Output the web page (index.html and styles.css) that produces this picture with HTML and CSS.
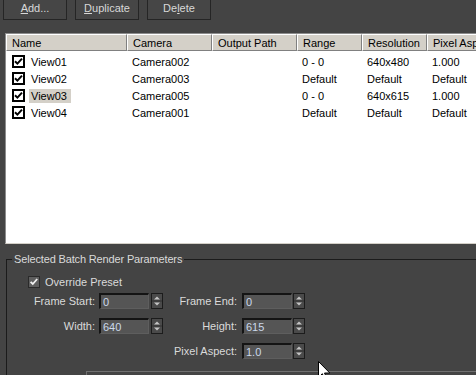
FILE: index.html
```html
<!DOCTYPE html>
<html lang="en">
<head>
    <meta charset="UTF-8">
    <meta name="viewport" content="width=device-width, initial-scale=1.0">
    <title>Batch Render</title>
    <link rel="stylesheet" href="styles.css">
</head>
<body>
    <div class="toolbar">
        <button class="tool-btn"><u>A</u>dd...</button>
        <button class="tool-btn"><u>D</u>uplicate</button>
        <button class="tool-btn">De<u>l</u>ete</button>
    </div>

    <div class="view-list">
        <table class="views">
            <thead>
                <tr>
                    <th class="c-name">Name</th>
                    <th class="c-cam">Camera</th>
                    <th class="c-out">Output Path</th>
                    <th class="c-range">Range</th>
                    <th class="c-res">Resolution</th>
                    <th class="c-aspect">Pixel Aspect</th>
                </tr>
            </thead>
            <tbody>
                <tr>
                    <td class="name"><svg class="chk" width="13" height="13" viewBox="0 0 13 13"><rect x="1" y="1" width="11" height="11" fill="#fff" stroke="#000" stroke-width="2"/><path d="M3 6.2l2.4 2.4 4.6-5" fill="none" stroke="#000" stroke-width="2"/></svg><span class="label">View01</span></td>
                    <td>Camera002</td>
                    <td></td>
                    <td>0 - 0</td>
                    <td>640x480</td>
                    <td>1.000</td>
                </tr>
                <tr>
                    <td class="name"><svg class="chk" width="13" height="13" viewBox="0 0 13 13"><rect x="1" y="1" width="11" height="11" fill="#fff" stroke="#000" stroke-width="2"/><path d="M3 6.2l2.4 2.4 4.6-5" fill="none" stroke="#000" stroke-width="2"/></svg><span class="label">View02</span></td>
                    <td>Camera003</td>
                    <td></td>
                    <td>Default</td>
                    <td>Default</td>
                    <td>Default</td>
                </tr>
                <tr>
                    <td class="name"><svg class="chk" width="13" height="13" viewBox="0 0 13 13"><rect x="1" y="1" width="11" height="11" fill="#fff" stroke="#000" stroke-width="2"/><path d="M3 6.2l2.4 2.4 4.6-5" fill="none" stroke="#000" stroke-width="2"/></svg><span class="label selected">View03</span></td>
                    <td>Camera005</td>
                    <td></td>
                    <td>0 - 0</td>
                    <td>640x615</td>
                    <td>1.000</td>
                </tr>
                <tr>
                    <td class="name"><svg class="chk" width="13" height="13" viewBox="0 0 13 13"><rect x="1" y="1" width="11" height="11" fill="#fff" stroke="#000" stroke-width="2"/><path d="M3 6.2l2.4 2.4 4.6-5" fill="none" stroke="#000" stroke-width="2"/></svg><span class="label">View04</span></td>
                    <td>Camera001</td>
                    <td></td>
                    <td>Default</td>
                    <td>Default</td>
                    <td>Default</td>
                </tr>
            </tbody>
        </table>
    </div>

    <fieldset class="params">
        <legend>Selected Batch Render Parameters</legend>

        <label class="option">
            <svg width="12" height="12" viewBox="0 0 12 12"><rect x="0.5" y="0.5" width="11" height="11" fill="#5e5e5e" stroke="#2a2a2a"/><path d="M2.6 5.8l2.2 2.2 4.4-5" fill="none" stroke="#f0f0f0" stroke-width="1.8"/></svg>
            <span>Override Preset</span>
        </label>

        <div class="fields">
            <span class="field-label">Frame Start:</span>
            <input class="num" type="text" value="0">
            <svg class="spin" width="12" height="16" viewBox="0 0 12 16"><rect x="0.5" y="0.5" width="11" height="15" fill="#4a4a4a" stroke="#1c1c1c"/><line x1="1" y1="8" x2="11" y2="8" stroke="#303030"/><path d="M6 3.5l-3 3h6z" fill="#c4c4c4"/><path d="M6 12.5l-3-3h6z" fill="#c4c4c4"/></svg>
            <span class="field-label wide">Frame End:</span>
            <input class="num" type="text" value="0">
            <svg class="spin" width="12" height="16" viewBox="0 0 12 16"><rect x="0.5" y="0.5" width="11" height="15" fill="#4a4a4a" stroke="#1c1c1c"/><line x1="1" y1="8" x2="11" y2="8" stroke="#303030"/><path d="M6 3.5l-3 3h6z" fill="#c4c4c4"/><path d="M6 12.5l-3-3h6z" fill="#c4c4c4"/></svg>

            <span class="field-label">Width:</span>
            <input class="num" type="text" value="640">
            <svg class="spin" width="12" height="16" viewBox="0 0 12 16"><rect x="0.5" y="0.5" width="11" height="15" fill="#4a4a4a" stroke="#1c1c1c"/><line x1="1" y1="8" x2="11" y2="8" stroke="#303030"/><path d="M6 3.5l-3 3h6z" fill="#c4c4c4"/><path d="M6 12.5l-3-3h6z" fill="#c4c4c4"/></svg>
            <span class="field-label wide">Height:</span>
            <input class="num" type="text" value="615">
            <svg class="spin" width="12" height="16" viewBox="0 0 12 16"><rect x="0.5" y="0.5" width="11" height="15" fill="#4a4a4a" stroke="#1c1c1c"/><line x1="1" y1="8" x2="11" y2="8" stroke="#303030"/><path d="M6 3.5l-3 3h6z" fill="#c4c4c4"/><path d="M6 12.5l-3-3h6z" fill="#c4c4c4"/></svg>

            <span class="field-label wide col4">Pixel Aspect:</span>
            <input class="num" type="text" value="1.0">
            <svg class="spin" width="12" height="16" viewBox="0 0 12 16"><rect x="0.5" y="0.5" width="11" height="15" fill="#4a4a4a" stroke="#1c1c1c"/><line x1="1" y1="8" x2="11" y2="8" stroke="#303030"/><path d="M6 3.5l-3 3h6z" fill="#c4c4c4"/><path d="M6 12.5l-3-3h6z" fill="#c4c4c4"/></svg>
        </div>

        <div class="sub-panel"></div>
    </fieldset>

    <!-- mouse pointer caught in the screenshot -->
    <svg class="cursor" width="12" height="19" viewBox="0 0 12 19"><path d="M0.5 0.5v16l3.8-3.8 2.6 6 2.2-1-2.6-5.7h5.3z" fill="#fff" stroke="#000"/></svg>
</body>
</html>
```

FILE: styles.css
```css
html, body {
    margin: 0;
}
body {
    position: relative;
    width: 476px;
    height: 375px;
    overflow: hidden;
    background-color: #444444;
    color: #dadada;
    font-family: "Liberation Sans", Arial, sans-serif;
    font-size: 11px;
}

/* top buttons */
.toolbar {
    display: flex;
    gap: 8px;
    padding-left: 3px;
}
.tool-btn {
    width: 64px;
    height: 20px;
    padding: 0 0 3px;
    background-color: #464646;
    border: 1px solid #252525;
    border-top: none;
    color: #d8d8d8;
    font: inherit;
}

/* list of views */
.view-list {
    box-sizing: border-box;
    width: 490px;
    height: 211px;
    margin: 13px 0 0 5px;
    background: #fff;
    border: 1px solid;
    border-color: #8c8c8c #d4d0c8 #d4d0c8 #8c8c8c;
    overflow: hidden;
}
.views {
    border-collapse: separate;
    border-spacing: 0;
    table-layout: fixed;
    width: 490px;
    color: #000;
    font-size: 11px;
}
.views th {
    box-sizing: border-box;
    height: 17px;
    padding: 1px 0 0 5px;
    background: #d4d0c8;
    border-top: 1px solid #fff;
    border-left: 1px solid #fff;
    border-right: 1px solid #808080;
    border-bottom: 1px solid #808080;
    font-weight: normal;
    text-align: left;
    line-height: 14px;
    white-space: nowrap;
    overflow: hidden;
}
.views th.c-name { width: 121px; }
.views th.c-cam { width: 85px; }
.views th.c-out { width: 85px; }
.views th.c-range { width: 65px; }
.views th.c-res { width: 65px; }
.views td {
    height: 17px;
    padding: 0 0 0 5px;
    line-height: 17px;
    white-space: nowrap;
}
.views tbody tr:first-child td {
    padding-top: 3px;
}
.views td.name {
    padding-left: 6px;
}
.chk {
    vertical-align: -2px;
    margin-right: 4px;
}
.label {
    display: inline-block;
    padding: 0 4px 0 2px;
    line-height: 14px;
}
.label.selected {
    background: #d4d0c8;
}

/* selected view parameters */
.params {
    margin: 9px 0 0 6px;
    padding: 0;
    min-width: 0;
    border: none;
    border-top: 1px solid #1b1b1b;
    border-left: 1px solid #1b1b1b;
}
.params legend {
    margin-left: 5px;
    padding: 0 2px;
    line-height: 13px;
    letter-spacing: -0.15px;
}
.option {
    display: flex;
    align-items: center;
    gap: 5px;
    height: 14px;
    margin: 9px 0 0 21px;
}
.fields {
    display: grid;
    grid-template-columns: 92px 52px 12px 79px 51px 12px;
    grid-auto-rows: 16px;
    row-gap: 9px;
    align-items: center;
    margin-top: 4px;
}
.field-label {
    padding-right: 4px;
    text-align: right;
    white-space: nowrap;
}
.field-label.wide {
    padding-right: 5px;
}
.field-label.col4 {
    grid-column: 4;
}
.num {
    box-sizing: border-box;
    width: 50px;
    height: 16px;
    padding: 0 0 0 2px;
    margin: 0;
    background: #555555;
    border: 2px solid;
    border-color: #141414 #5e5e5e #5e5e5e #141414;
    border-width: 2px 1px 1px 2px;
    color: #cbd8ea;
    font: inherit;
    outline: none;
}
.spin {
    display: block;
}
.sub-panel {
    height: 20px;
    margin: 12px 0 0 79px;
    border-top: 1px solid #707070;
    border-left: 1px solid #707070;
}

.cursor {
    position: absolute;
    left: 318px;
    top: 361px;
}
```
